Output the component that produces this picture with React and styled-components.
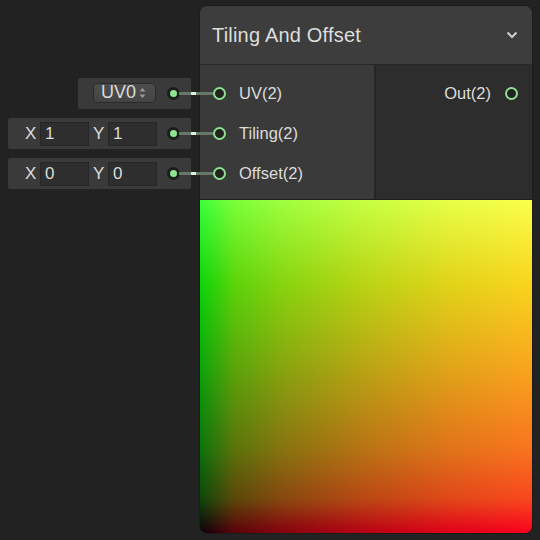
import React from "react";
import styled, { createGlobalStyle } from "styled-components";

const Global = createGlobalStyle`
  html, body { margin: 0; padding: 0; background: #222222; }
  body { font-family: "Liberation Sans", Arial, sans-serif; }
  * { box-sizing: border-box; }
`;

const Canvas = styled.div`
  width: 540px;
  height: 540px;
  display: flex;
  overflow: hidden;
  background: #222222;
`;

const FieldColumn = styled.div`
  width: 199px;
  flex: none;
  display: flex;
  flex-direction: column;
  align-items: flex-end;
  gap: 9px;
  padding: 78px 8px 0 0;
  position: relative;
  z-index: 2;
`;

const FieldBox = styled.div`
  width: ${(p) => p.$w}px;
  height: 31px;
  background: #3a3a3a;
  border-radius: 2px;
  display: flex;
  align-items: center;
  padding-left: ${(p) => p.$pl}px;
  padding-right: 11px;
  color: #dcdcdc;
  font-size: 17px;
`;

const AxisLabel = styled.span`
  width: 11px;
  margin-right: 4px;
  line-height: 1;
`;

const NumField = styled.div`
  width: 49px;
  height: 24px;
  background: #2e2e2e;
  border: 1px solid #262626;
  margin-right: 4px;
  display: flex;
  align-items: center;
  padding-left: 4px;
  font-size: 17px;
  color: #dcdcdc;
`;

const Dropdown = styled.div`
  width: 63px;
  height: 20px;
  margin-top: -2px;
  border-radius: 4px;
  border: 1px solid #2a2a2a;
  background: linear-gradient(#4d4d4d, #444444);
  display: flex;
  align-items: center;
  padding-left: 7px;
  gap: 3px;
  font-size: 18px;
  color: #dcdcdc;
`;

const Arrows = styled.svg`
  width: 7px;
  height: 12px;
  flex: none;
`;

const Dot = styled.div`
  margin-left: auto;
  width: 13px;
  height: 13px;
  border-radius: 50%;
  background: #1c1c1c;
  display: flex;
  align-items: center;
  justify-content: center;
  position: relative;
  flex: none;
  &::before {
    content: "";
    width: 7px;
    height: 7px;
    border-radius: 50%;
    background: #8fe48f;
  }
`;

const Wire = styled.div`
  position: absolute;
  left: 12px;
  top: 5px;
  width: 34px;
  height: 3px;
  background: #687868;
  &::after {
    content: "";
    position: absolute;
    left: 12px;
    top: 0;
    width: 5px;
    height: 3px;
    background: #d8f5d8;
  }
`;

const Node = styled.div`
  margin-top: 5px;
  width: 334px;
  height: 529px;
  flex: none;
  border: 1px solid #1b1b1b;
  border-radius: 8px;
  overflow: hidden;
  background: #2d2d2d;
  display: flex;
  flex-direction: column;
  color: #dedede;
`;

const Header = styled.div`
  height: 59px;
  flex: none;
  background: #3d3d3d;
  border-bottom: 1px solid #272727;
  display: flex;
  align-items: center;
  justify-content: space-between;
  padding: 0 14px 0 12px;
  font-size: 20px;
  letter-spacing: 0.2px;
`;

const Ports = styled.div`
  height: 135px;
  flex: none;
  display: grid;
  grid-template-columns: 176px 1fr;
  border-bottom: 1px solid #1e1e1e;
`;

const InputCol = styled.div`
  background: #3a3a3a;
  border-right: 2px solid #262626;
  padding-top: 8px;
`;

const OutputCol = styled.div`
  background: #2d2d2d;
  padding-top: 8px;
`;

const PortRow = styled.div`
  height: 40px;
  display: flex;
  align-items: center;
  justify-content: ${(p) => (p.$out ? "flex-end" : "flex-start")};
  gap: ${(p) => (p.$out ? 14 : 13)}px;
  padding: ${(p) => (p.$out ? "0 14px 0 0" : "0 0 0 13px")};
  font-size: 16.5px;
  color: #dcdcdc;
`;

const Ring = styled.div`
  width: 13px;
  height: 13px;
  border-radius: 50%;
  border: 2px solid #8fe08f;
  background: #222222;
  flex: none;
`;

const Preview = styled.div`
  flex: 1;
  background:
    linear-gradient(to right, rgb(12,0,10) 0%, rgb(89,0,10) 10%, rgb(136,0,15) 25%, rgb(186,0,20) 50%, rgb(224,0,25) 75%, rgb(250,0,30) 100%),
    linear-gradient(to top, #000 0%, rgb(0,70,0) 10%, rgb(0,115,0) 25%, rgb(0,165,0) 50%, rgb(0,212,0) 75%, rgb(50,255,50) 100%);
  background-blend-mode: screen;
`;

const Chevron = () => (
  <svg width="12" height="8" viewBox="0 0 12 8">
    <path d="M1.5 1.5 L6 6 L10.5 1.5" fill="none" stroke="#cfcfcf" strokeWidth="2" />
  </svg>
);

const Connector = () => (
  <Dot>
    <Wire />
  </Dot>
);

const VecField = ({ x, y }) => (
  <FieldBox $w={183} $pl={17}>
    <AxisLabel>X</AxisLabel>
    <NumField>{x}</NumField>
    <AxisLabel>Y</AxisLabel>
    <NumField>{y}</NumField>
    <Connector />
  </FieldBox>
);

export default function App() {
  return (
    <>
      <Global />
      <Canvas>
        <FieldColumn>
          <FieldBox $w={113} $pl={15}>
            <Dropdown>
              UV0
              <Arrows viewBox="0 0 7 12">
                <path d="M0.5 4.5 L3.5 1 L6.5 4.5 Z" fill="#9a9a9a" />
                <path d="M0.5 7.5 L3.5 11 L6.5 7.5 Z" fill="#9a9a9a" />
              </Arrows>
            </Dropdown>
            <Connector />
          </FieldBox>
          <VecField x="1" y="1" />
          <VecField x="0" y="0" />
        </FieldColumn>
        <Node>
          <Header>
            <span>Tiling And Offset</span>
            <Chevron />
          </Header>
          <Ports>
            <InputCol>
              <PortRow>
                <Ring />
                <span>UV(2)</span>
              </PortRow>
              <PortRow>
                <Ring />
                <span>Tiling(2)</span>
              </PortRow>
              <PortRow>
                <Ring />
                <span>Offset(2)</span>
              </PortRow>
            </InputCol>
            <OutputCol>
              <PortRow $out>
                <span>Out(2)</span>
                <Ring />
              </PortRow>
            </OutputCol>
          </Ports>
          <Preview />
        </Node>
      </Canvas>
    </>
  );
}
